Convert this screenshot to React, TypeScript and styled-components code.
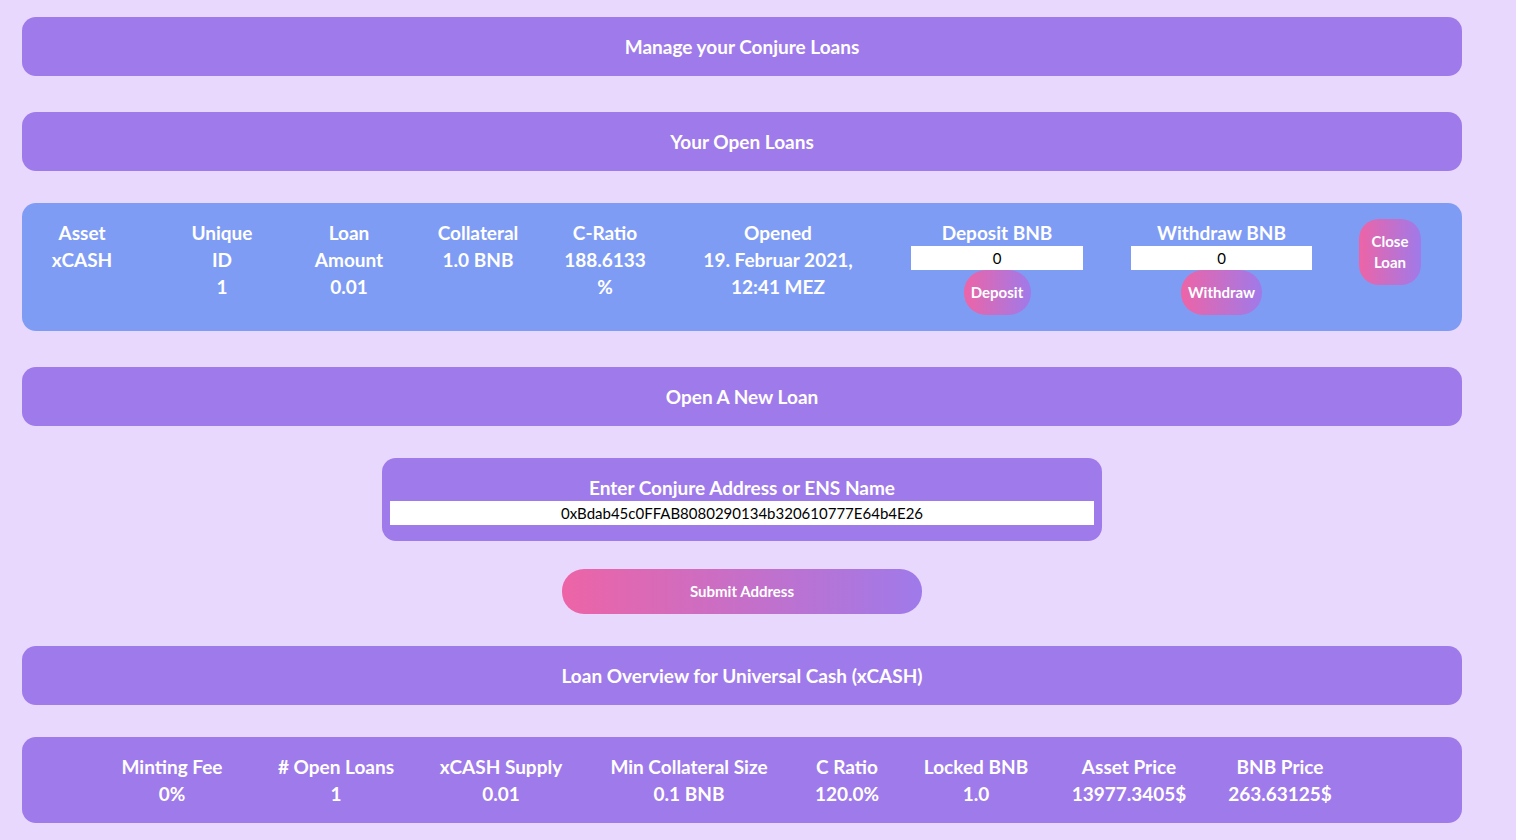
import React from "react";
import styled, { createGlobalStyle } from "styled-components";

const Global = createGlobalStyle`
  html, body { margin: 0; padding: 0; }
  body {
    background: #e9d8fd;
    font-family: Lato, "Open Sans", Arial, sans-serif;
    color: #fff;
  }
`;

const Page = styled.div`
  display: flex;
  flex-direction: column;
  align-items: flex-start;
  padding: 17px 0 20px 22px;
  width: 1440px;
`;

const Bar = styled.div<{ $mt?: number }>`
  box-sizing: border-box;
  width: 1440px;
  height: 59px;
  margin-top: ${(p) => p.$mt ?? 0}px;
  background: #9f7aea;
  border-radius: 14px;
  display: flex;
  align-items: center;
  justify-content: center;
  font-weight: 700;
  font-size: 19px;
`;

const LoanPanel = styled.div<{ $mt?: number }>`
  box-sizing: border-box;
  width: 1440px;
  margin-top: ${(p) => p.$mt ?? 0}px;
  background: #7f9cf5;
  border-radius: 14px;
  padding: 16px 0 16px 25px;
  display: flex;
  align-items: flex-start;
`;

const Col = styled.div<{ $w: number; $ml: number }>`
  width: ${(p) => p.$w}px;
  margin-left: ${(p) => p.$ml}px;
  flex: none;
  display: flex;
  flex-direction: column;
  align-items: center;
  text-align: center;
  font-weight: 700;
  font-size: 19px;
  line-height: 27px;
`;

const SmallInput = styled.input`
  box-sizing: border-box;
  width: 100%;
  height: 24px;
  border: none;
  outline: none;
  background: #fff;
  text-align: center;
  font-family: Lato, Arial, sans-serif;
  font-size: 15px;
  color: #000;
  padding: 0;
`;

const PillButton = styled.button<{ $w: number; $h: number; $r: number }>`
  width: ${(p) => p.$w}px;
  height: ${(p) => p.$h}px;
  border-radius: ${(p) => p.$r}px;
  border: none;
  background: linear-gradient(90deg, #ed64a6, #9f7aea);
  color: #fff;
  font-family: Lato, Arial, sans-serif;
  font-weight: 700;
  font-size: 15px;
  line-height: 21px;
  padding: 0;
  cursor: pointer;
  flex: none;
`;

const Center = styled.div<{ $mt?: number }>`
  width: 1440px;
  display: flex;
  justify-content: center;
  margin-top: ${(p) => p.$mt ?? 0}px;
`;

const AddressCard = styled.div`
  box-sizing: border-box;
  width: 720px;
  background: #9f7aea;
  border-radius: 14px;
  padding: 16px 8px 16px;
  display: flex;
  flex-direction: column;
  align-items: center;
`;

const CardTitle = styled.div`
  font-weight: 700;
  font-size: 19px;
  line-height: 27px;
`;

const AddressInput = styled.input`
  box-sizing: border-box;
  width: 100%;
  height: 24px;
  border: none;
  outline: none;
  background: #fff;
  text-align: center;
  font-family: Lato, Arial, sans-serif;
  font-size: 15px;
  color: #000;
  padding: 0;
`;

const StatsPanel = styled.div<{ $mt?: number }>`
  box-sizing: border-box;
  width: 1440px;
  margin-top: ${(p) => p.$mt ?? 0}px;
  background: #9f7aea;
  border-radius: 14px;
  padding: 16px 0 16px 68px;
  display: flex;
`;

const Stat = styled.div<{ $w: number }>`
  width: ${(p) => p.$w}px;
  flex: none;
  display: flex;
  flex-direction: column;
  align-items: center;
  font-weight: 700;
  font-size: 19px;
  line-height: 27px;
  white-space: nowrap;
`;

const loanCols = [
  { w: 70, ml: 0, label: "Asset", value: "xCASH" },
  { w: 74, ml: 68, label: "Unique ID", value: "1" },
  { w: 88, ml: 46, label: "Loan Amount", value: "0.01" },
  { w: 96, ml: 37, label: "Collateral", value: "1.0 BNB" },
  { w: 88, ml: 35, label: "C-Ratio", value: "188.6133 %" },
  { w: 166, ml: 46, label: "Opened", value: "19. Februar 2021, 12:41 MEZ" },
];

const stats: [string, string, number][] = [
  ["Minting Fee", "0%", 164],
  ["# Open Loans", "1", 164],
  ["xCASH Supply", "0.01", 166],
  ["Min Collateral Size", "0.1 BNB", 210],
  ["C Ratio", "120.0%", 106],
  ["Locked BNB", "1.0", 152],
  ["Asset Price", "13977.3405$", 154],
  ["BNB Price", "263.63125$", 148],
];

export default function App() {
  return (
    <>
      <Global />
      <Page>
        <Bar>Manage your Conjure Loans</Bar>
        <Bar $mt={36}>Your Open Loans</Bar>
        <LoanPanel $mt={32}>
          {loanCols.map((c) => (
            <Col key={c.label} $w={c.w} $ml={c.ml}>
              <div>{c.label}</div>
              <div>{c.value}</div>
            </Col>
          ))}
          <Col $w={172} $ml={50}>
            <div>Deposit BNB</div>
            <SmallInput defaultValue="0" />
            <PillButton $w={67} $h={45} $r={22}>Deposit</PillButton>
          </Col>
          <Col $w={181} $ml={48}>
            <div>Withdraw BNB</div>
            <SmallInput defaultValue="0" />
            <PillButton $w={81} $h={45} $r={22}>Withdraw</PillButton>
          </Col>
          <Col $w={62} $ml={47}>
            <PillButton $w={62} $h={66} $r={20}>
              Close
              <br />
              Loan
            </PillButton>
          </Col>
        </LoanPanel>
        <Bar $mt={36}>Open A New Loan</Bar>
        <Center $mt={32}>
          <AddressCard>
            <CardTitle>Enter Conjure Address or ENS Name</CardTitle>
            <AddressInput defaultValue="0xBdab45c0FFAB8080290134b320610777E64b4E26" />
          </AddressCard>
        </Center>
        <Center $mt={28}>
          <PillButton $w={360} $h={45} $r={22}>Submit Address</PillButton>
        </Center>
        <Bar $mt={32}>Loan Overview for Universal Cash (xCASH)</Bar>
        <StatsPanel $mt={32}>
          {stats.map(([l, v, w]) => (
            <Stat key={l} $w={w}>
              <div>{l}</div>
              <div>{v}</div>
            </Stat>
          ))}
        </StatsPanel>
      </Page>
    </>
  );
}
